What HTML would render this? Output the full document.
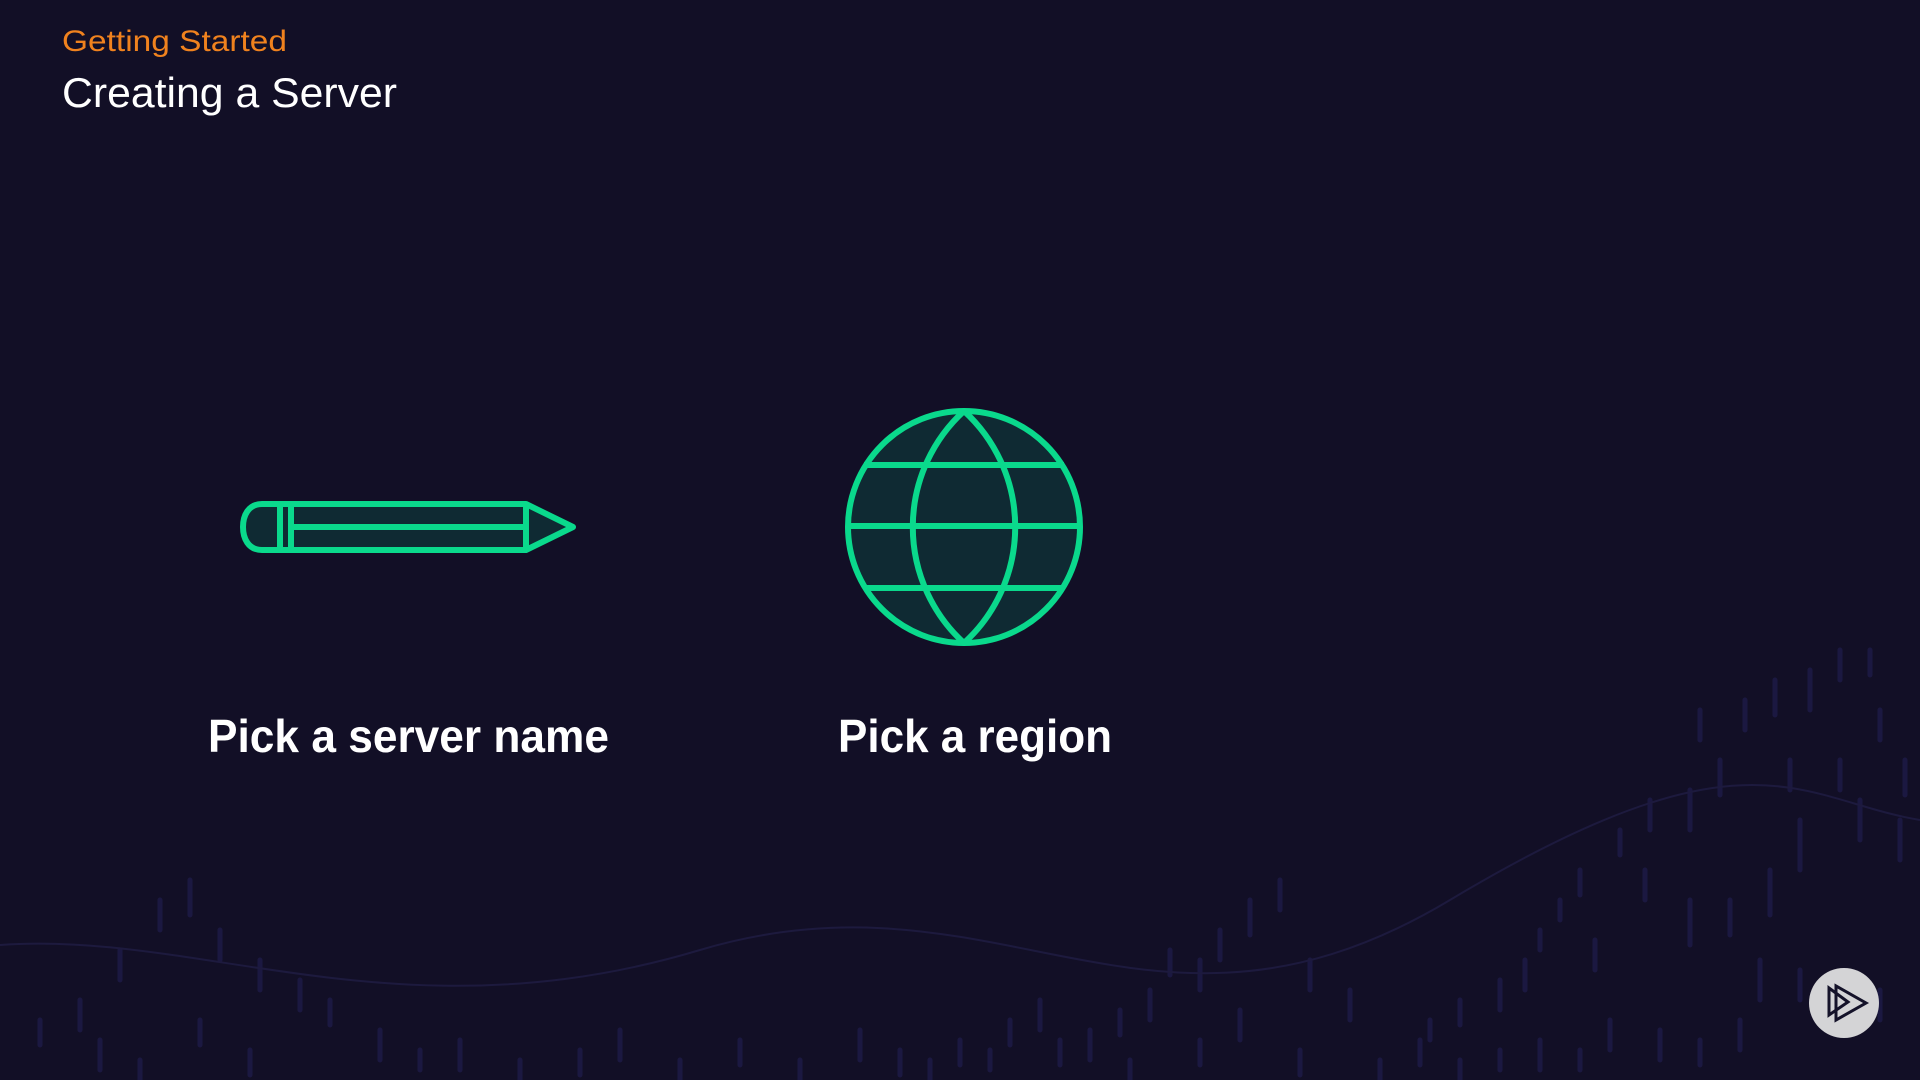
<!DOCTYPE html>
<html><head><meta charset="utf-8"><style>
html,body{margin:0;padding:0;background:#120f26;width:1920px;height:1080px;overflow:hidden}
svg{display:block}
</style></head><body>
<svg width="1920" height="1080" viewBox="0 0 1920 1080" xmlns="http://www.w3.org/2000/svg">
<rect width="1920" height="1080" fill="#120f26"/>
<g stroke="#1d1a44" stroke-width="5" stroke-linecap="round" opacity="0.9">
<path d="M1840 650v30M1870 650v25M1810 670v40M1775 680v35M1745 700v30M1700 710v30M1720 760v35M1690 790v40M1650 800v30M1620 830v25M1580 870v25M1560 900v20M1540 930v20M1525 960v30M1500 980v30M1460 1000v25M1430 1020v20M1645 870v30M1595 940v30M1690 900v45M1730 900v35M1770 870v45M1800 820v50M1860 800v40M1900 820v40M1905 760v35M1880 710v30M1840 760v30M1790 760v30M1760 960v40M1800 970v30M1880 990v30M1740 1020v30M1700 1040v25M1660 1030v30M1610 1020v30M1580 1050v20M1540 1040v30M1500 1050v20M1460 1060v20M1420 1040v25M1380 1060v20"/>
<path d="M1280 880v30M1250 900v35M1220 930v30M1200 960v30M1170 950v25M1150 990v30M1120 1010v25M1090 1030v30M1060 1040v25M1040 1000v30M1010 1020v25M990 1050v20M960 1040v25M930 1060v20M1310 960v30M1350 990v30M1240 1010v30M1200 1040v25M1130 1060v20M1300 1050v25"/>
<path d="M160 900v30M190 880v35M220 930v30M120 950v30M260 960v30M300 980v30M330 1000v25M80 1000v30M40 1020v25M100 1040v30M140 1060v20M200 1020v25M250 1050v25M380 1030v30M420 1050v20M460 1040v30M520 1060v20M580 1050v25M620 1030v30M680 1060v20M740 1040v25M800 1060v20M860 1030v30M900 1050v25"/>
</g>
<path d="M0 945 C 200 930, 400 1040, 700 950 S 1150 1080, 1450 900 S 1800 800, 1920 820" fill="none" stroke="#1d1a3e" stroke-width="2"/>

<text x="62" y="51" font-family="Liberation Sans, sans-serif" font-size="30" fill="#f0821e" textLength="225" lengthAdjust="spacingAndGlyphs">Getting Started</text>
<text x="62" y="107" font-family="Liberation Sans, sans-serif" font-size="42" fill="#ffffff" textLength="335" lengthAdjust="spacingAndGlyphs">Creating a Server</text>

<!-- pencil -->
<g fill="#0f2a33" stroke="#0ad98c" stroke-width="6" stroke-linejoin="round">
<path d="M262 504 H526 L573 527 L526 550 H262 C248 550 243 538 243 527 C243 516 248 504 262 504 Z"/>
<path d="M280 504V550M291 504V550M291 527H526M526 504V550" fill="none"/>
</g>

<!-- globe -->
<g fill="none" stroke="#0ad98c" stroke-width="6">
<circle cx="964" cy="527" r="116" fill="#0f2a33"/>
<path d="M964 411 A157 157 0 0 1 964 643 A157 157 0 0 1 964 411 Z" stroke-linejoin="round"/>
<path d="M864 465H1064M848 526H1080M866 588H1062"/>
</g>

<text x="208" y="752" font-family="Liberation Sans, sans-serif" font-size="46" font-weight="bold" fill="#ffffff" textLength="401" lengthAdjust="spacingAndGlyphs">Pick a server name</text>
<text x="838" y="752" font-family="Liberation Sans, sans-serif" font-size="46" font-weight="bold" fill="#ffffff" textLength="274" lengthAdjust="spacingAndGlyphs">Pick a region</text>

<!-- logo -->
<circle cx="1844" cy="1003" r="35" fill="#d4d4d6"/>
<g fill="none" stroke="#141229" stroke-width="3" stroke-linejoin="miter">
<path d="M1829 988V1015L1848 1002Z"/>
<path d="M1836 986V1020L1866 1003Z"/>
</g>
</svg>
</body></html>
